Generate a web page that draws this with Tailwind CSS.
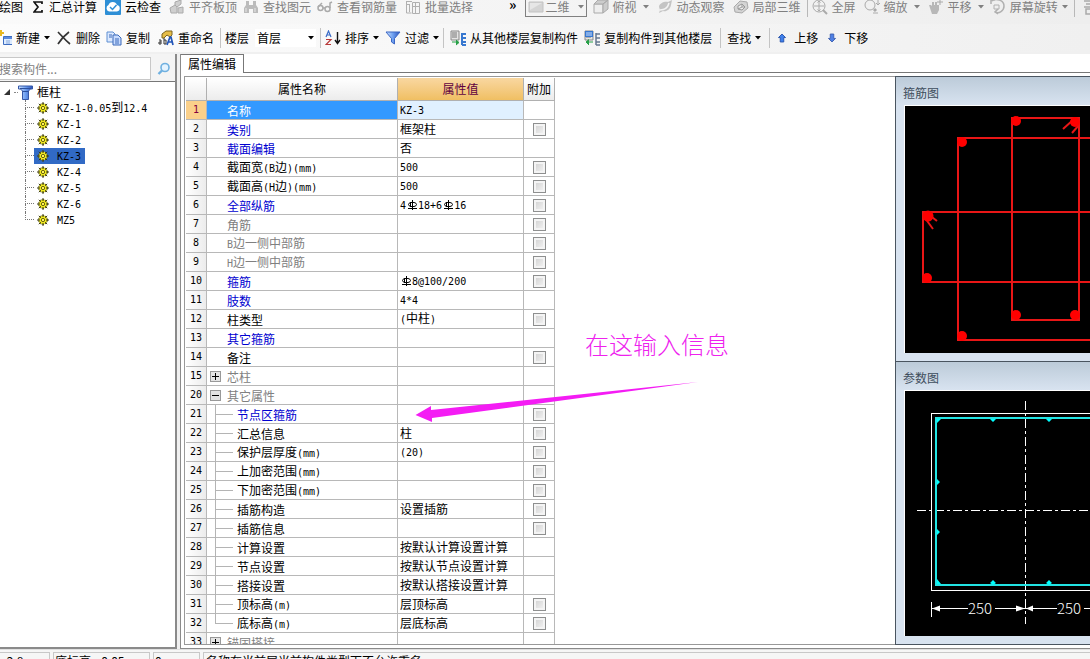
<!DOCTYPE html>
<html lang="zh-CN">
<head>
<meta charset="utf-8">
<title>属性编辑</title>
<script src="https://cdn.jsdelivr.net/npm/@tailwindcss/browser@4"></script>
</head>
<body class="flex h-screen flex-col overflow-hidden bg-[#f3f3f3] font-['Noto_Sans_CJK_SC',sans-serif] text-xs leading-4 text-black">

<svg class="absolute size-0" aria-hidden="true">
  <defs>
    <linearGradient id="blue" x1="0" x2="1"><stop offset="0" stop-color="#cfe4ff"/><stop offset=".5" stop-color="#6d9ff0"/><stop offset="1" stop-color="#2a50b8"/></linearGradient>
    <symbol id="caret" viewBox="0 0 6 4"><path d="M0 0h6L3 3.5z" fill="currentColor"/></symbol>
    <symbol id="gear" viewBox="0 0 12 12">
      <circle cx="6" cy="6" r="4.4" fill="#f4ee20" stroke="#3c3a10" stroke-dasharray="1.8 1"/>
      <path d="M6 0v3M6 9v3M0 6h3M9 6h3M1.8 1.8l2 2M8.2 8.2l2 2M10.2 1.8l-2 2M3.8 8.2l-2 2" stroke="#3c3a10"/>
      <circle cx="6" cy="6" r="1.7" fill="#fff45a" stroke="#6a6410"/>
    </symbol>
    <symbol id="rebar" viewBox="0 0 12 12"><path d="M6.500 1v10M2 9.500h9" fill="none" stroke="#000"/><ellipse cx="6.500" cy="5.500" rx="4" ry="2.200" fill="none" stroke="#000"/><path d="M4.500 3v5" stroke="#000"/></symbol>
    <symbol id="floors" viewBox="0 0 16 16">
      <path d="M1 1h8v9H1z" fill="#e4e4e4" stroke="#888"/><path d="M2 3h5M2 5h5M2 7h5" stroke="#777"/>
    </symbol>
  </defs>
</svg>

<header class="shrink-0">
  <nav aria-label="视图工具栏" class="flex h-6 items-center overflow-hidden bg-linear-to-r from-[#fafafa] to-[#eeeeee] pb-2.5 whitespace-nowrap text-[#808080]">
    <button class="-ml-px text-black">绘图</button>
    <button class="ml-2.5 flex items-center gap-1.5 text-black"><svg class="h-3 w-2.5" viewBox="0 0 10 12"><path d="M9 3V1H1l4 5-4 5h8V9" fill="none" stroke="#111" stroke-width="1.7"/></svg>汇总计算</button>
    <button class="ml-2 flex items-center gap-1 text-black"><svg class="size-4" viewBox="0 0 16 16"><rect width="16" height="16" rx="1" fill="#2e8fd6"/><path d="M4 12.500a3.500 3.500 0 0 1-.5-6.500 4.500 4.500 0 0 1 8.500 0 3.300 3.300 0 0 1 0 6.500z" fill="#fff"/><path d="m5 8 2.500 2.500L11.500 6" fill="none" stroke="#2e8fd6" stroke-width="1.500"/></svg>云检查</button>
    <button class="ml-2 flex items-center gap-1" disabled><svg class="size-4" viewBox="0 0 16 16"><path d="M1 9 6 6l2 2v6H2zM6 6V3l6-2v4l-4 3M9 9l5-1v6H9z" fill="#cfcfcf" stroke="#aaa"/></svg>平齐板顶</button>
    <button class="ml-1.5 flex items-center gap-1" disabled><svg class="size-4" viewBox="0 0 16 16"><path d="M3 2h3v4h4V2h3v4l2 3v5h-5v-4H6v4H1V9l2-3z" fill="#bbb"/><path d="M3 9v4M12 9v4" stroke="#e8e8e8"/></svg>查找图元</button>
    <button class="ml-1.5 flex items-center gap-1" disabled><svg class="size-4" viewBox="0 0 16 16" fill="none" stroke="#aaa" stroke-width="1.500"><circle cx="3.500" cy="9" r="2.500"/><circle cx="10.500" cy="10" r="2.500"/><path d="M6 9l2 0M1 8 5 4M13 9V4l2-1"/></svg>查看钢筋量</button>
    <button class="ml-2 flex items-center gap-1" disabled><svg class="size-4" viewBox="0 0 16 16" fill="none" stroke="#b0b0b0"><path d="M1 2.500h6M1 5.500h4M1.500 2v12h5M4.500 5v8M7.500 3.500h7v11h-7zM7.500 7.500h7M10.500 4v10"/></svg>批量选择</button>
    <button class="-mt-1.5 ml-9 w-2 text-sm leading-3 font-bold text-black" aria-label="更多">»</button>
    <button class="-mt-1 ml-2 flex h-6 items-center gap-0.5 border border-[#808080] pt-1 pr-0.5 pl-0.5" disabled><svg class="h-3 w-4" viewBox="0 0 16 12"><path d="M1 1h14v10H1z" fill="#d4d4d4" stroke="#c2c2c2"/><path d="M2 2h12L2 9z" fill="#e6e6e6"/></svg>二维<svg class="ml-1.5 h-1 w-1.5"><use href="#caret"/></svg></button>
    <button class="ml-1.5 flex items-center gap-1" disabled><svg class="size-4" viewBox="0 0 16 16"><path d="M1 5h9v9H1z" fill="#eee" stroke="#aaa"/><path d="m1 5 4-4h10l-5 4zM10 5l5-4v9l-5 4z" fill="#ccc" stroke="#aaa"/></svg>俯视<svg class="ml-0.5 h-1 w-1.5"><use href="#caret"/></svg></button>
    <button class="ml-2 flex items-center gap-1" disabled><svg class="size-4" viewBox="0 0 16 16"><path d="M2 8c0-4 6-6 9-5l4-2-1 5c-1 5-5 7-8 6l-4 2 1-3z" fill="#c4c4c4"/><path d="M3 11c5 0 8-3 9-7" fill="none" stroke="#f4f4f4" stroke-width="1.500"/></svg>动态观察</button>
    <button class="ml-2 flex items-center gap-1" disabled><svg class="size-4" viewBox="0 0 16 16"><path d="m1 8 6-6 7 1 1 6-6 5-7-1z" fill="#d4d4d4" stroke="#aaa"/><path d="m5 7 4-2 3 3-3 3-4-1zM9 5v3l-4 2M9 8h3" fill="#eee" stroke="#999"/></svg>局部三维</button>
    <span class="ml-1.5 h-5 w-px shrink-0 bg-[#b8b8b8]"></span>
    <button class="ml-1 flex items-center gap-1" disabled><svg class="size-4" viewBox="0 0 16 16" fill="none" stroke="#aaa"><circle cx="7" cy="7" r="6"/><path d="M7 2v10M2 7h10M5.500 3.500 7 2l1.500 1.500M5.500 10.500 7 12l1.500-1.500"/><path d="m11 11 4 4" stroke-width="2"/></svg>全屏</button>
    <button class="ml-2 flex items-center gap-1" disabled><svg class="size-4" viewBox="0 0 16 16" fill="none" stroke="#aaa"><circle cx="6" cy="6" r="5"/><path d="m10 10 2 2" stroke-width="3"/><path d="M14 1v5m-2-2 2 2 2-2M9 14h5"/></svg>缩放<svg class="ml-0.5 h-1 w-1.5"><use href="#caret"/></svg></button>
    <button class="ml-2 flex items-center gap-1" disabled><svg class="size-4" viewBox="0 0 16 16"><path d="M2 9 1 6l2 0 1 1V3h2v3h1V3h2v3h2v5l-2 4H4z" fill="#b8b8b8"/><path d="M12 0v6M9 3h6" stroke="#aaa"/></svg>平移<svg class="ml-0.5 h-1 w-1.5"><use href="#caret"/></svg></button>
    <button class="ml-1.5 flex items-center gap-1" disabled><svg class="size-4" viewBox="0 0 16 16" fill="none" stroke="#b0b0b0"><path d="M1 5V1h4M2 2c4-3 12-1 12 5 0 5-5 8-9 6M8 10l-3 3 3 2" stroke-width="1.500"/><path d="M4 6h5v4H4z"/></svg>屏幕旋转<svg class="h-1 w-1.5"><use href="#caret"/></svg></button>
    <span class="ml-1.5 h-5 w-px shrink-0 bg-[#b8b8b8]"></span>
    <button class="ml-2 shrink-0" aria-label="楼层显示" disabled><svg class="size-4" viewBox="0 0 16 16"><path d="M1 2h14M3 5h12M1 8h14M3 10h12v5H3z" fill="none" stroke="#aaa" stroke-width="1.500"/></svg></button>
  </nav>

  <nav aria-label="构件工具栏" class="flex h-7 items-center bg-linear-to-r from-[#fcfcfc] to-[#f0f0f0] whitespace-nowrap">
    <button class="flex items-center gap-1"><svg class="h-4 w-3" viewBox="0 0 12 16"><path d="M0 3h4M1 0v6" stroke="#e8b820" stroke-width="2"/><path d="M3.500 6.500h9v8h-9z" fill="#dcebff" stroke="#3c6cc0"/><path d="M4 8h8" stroke="#5a8ae0" stroke-width="2"/><path d="M6 11h4M6 13h4" stroke="#88a8dc"/></svg>新建<svg class="h-1 w-1.5"><use href="#caret"/></svg></button>
    <button class="ml-1.5 flex items-center gap-1"><svg class="size-4" viewBox="0 0 16 16"><path d="M2 2c4 4 7 8 12 12M13 2C9 5 5 9 2 14" fill="none" stroke="#333" stroke-width="1.700"/></svg>删除</button>
    <button class="ml-1.5 flex items-center gap-1"><svg class="size-4" viewBox="0 0 16 16"><path d="M1 2h6l2 2v8H1z" fill="#dbe9ff" stroke="#5e8fd2"/><path d="M7 5h5l3 3v7H7z" fill="#c8dcff" stroke="#3b69b8"/><path d="M3 5h3M3 7h3M9 9h4M9 11h4M9 13h4" stroke="#3b69b8"/></svg>复制</button>
    <button class="ml-2 flex items-center gap-1"><svg class="size-4" viewBox="0 0 16 16"><path d="m4 4 4-3h6v4l-2 2-3-2-3 3H4z" fill="#e6bd48" stroke="#7c6420"/><path d="M9 15l3-8h1l2 8M10 12h4" fill="none" stroke="#2356b8" stroke-width="1.700"/><path d="M1 10h2v4H1v-2h2M6 8v6h2v-4H6" fill="none" stroke="#333"/></svg>重命名</button>
    <span class="ml-1.5 h-5 w-px bg-[#c4c4c4]"></span>
    <label for="floor" class="ml-1">楼层</label>
    <span class="relative ml-1.5 flex items-center">
      <select id="floor" class="h-[18px] w-[61px] appearance-none bg-white pl-0.5"><option>首层</option></select>
      <svg class="pointer-events-none absolute right-0.5 h-1 w-1.5"><use href="#caret"/></svg>
    </span>
    <span class="ml-1 h-5 w-px bg-[#c4c4c4]"></span>
    <button class="ml-1 flex items-center gap-1"><svg class="size-4" viewBox="0 0 16 16" fill="none"><path d="m1 7 2.500-6L6 7M2 5h3" stroke="#3a6cc8" stroke-width="1.200"/><path d="M1 9.500h5l-5 5h5" stroke="#b83838" stroke-width="1.200"/><path d="M12.500 2v11M10 10l2.500 3.500L15 10" stroke="#111" stroke-width="1.400"/></svg>排序<svg class="h-1 w-1.5"><use href="#caret"/></svg></button>
    <button class="ml-1.5 flex items-center gap-1"><svg class="size-4" viewBox="0 0 16 16"><path d="M1 2h14L9.500 8.500V14l-3-2V8.500z" fill="url(#blue)" stroke="#3b66c4"/></svg>过滤<svg class="h-1 w-1.5"><use href="#caret"/></svg></button>
    <span class="ml-1 h-5 w-px bg-[#c4c4c4]"></span>
    <button class="ml-1.5 flex items-center gap-1"><svg class="size-4" viewBox="0 0 16 16"><use href="#floors"/><path d="M12 3v12M12 4h4M12 8h4M12 12h4M12 15h4" stroke="#3878d0" stroke-width="2"/><path d="M2 12h6M6 10l3 2.500L6 15" fill="#28a048" stroke="#28a048"/></svg>从其他楼层复制构件</button>
    <button class="ml-1.5 flex items-center gap-1"><svg class="size-4" viewBox="0 0 16 16"><use href="#floors"/><path d="M1 1h8v6H1z" fill="#3878d0"/><path d="M2 3h6M2 5h6" stroke="#cfe2ff"/><path d="M12 3v12M12 4h4M12 8h4M12 12h4M12 15h4" stroke="#667890" stroke-width="1.500"/><path d="M3 12h6M5 9.500 2 12l3 3" fill="#28a048" stroke="#28a048"/></svg>复制构件到其他楼层</button>
    <span class="ml-2 h-5 w-px bg-[#c4c4c4]"></span>
    <button class="ml-1.5 flex items-center gap-1">查找<svg class="h-1 w-1.5"><use href="#caret"/></svg></button>
    <span class="ml-2 h-5 w-px bg-[#c4c4c4]"></span>
    <button class="ml-2 flex items-center gap-2"><svg class="h-2.5 w-2" viewBox="0 0 9 10"><path d="m4.500.5 4 4h-2v5h-4v-5h-2z" fill="#3f80ec" stroke="#2450a8"/></svg>上移</button>
    <button class="ml-2.5 flex items-center gap-2"><svg class="h-2.5 w-2" viewBox="0 0 9 10"><path d="m4.500 9.500 4-4h-2v-5h-4v5h-2z" fill="#4f80e4" stroke="#3a5cb0"/></svg>下移</button>
  </nav>
</header>

<main class="flex min-h-0 flex-1 bg-[#f0f0f0] pt-0.5">
  <aside class="flex w-[177px] shrink-0 flex-col border-r-2 border-b-2 border-[#8a8a8a] bg-white">
    <form class="flex h-7 shrink-0 items-center border-b border-[#777] bg-[#f4f4f4] pt-1 pb-0.5">
      <input type="search" aria-label="搜索构件" placeholder="搜索构件..." class="-ml-0.5 h-[23px] w-[153px] border border-[#c8c8c8] bg-white placeholder:text-[#808080]">
      <button type="button" aria-label="搜索" class="ml-1.5"><svg class="size-3.5" viewBox="0 0 14 14" fill="none" stroke="#6fb0e0"><circle cx="8" cy="5.500" r="4" fill="#e4f3ff" stroke-width="1.600"/><path d="M5 8.500 1.500 12" stroke-width="2.400"/></svg></button>
    </form>
    <div class="pt-0.5">
      <div class="flex h-4 items-center pl-1">
        <svg class="size-1.5" viewBox="0 0 7 7"><path d="M7 0v7H0z" fill="#333"/></svg>
        <span class="ml-1 w-1 border-t border-dotted border-[#888]"></span>
        <svg class="size-[15px]" viewBox="0 0 15 15"><path d="M.5 1h14v3h-2l-2 2v8.500h-6V6l-2-2h-2z" fill="url(#blue)" stroke="#3558a8"/><path d="M2 3.500h11M5 6.500h5" stroke="#2b4f9c"/></svg>
        <span class="ml-1">框柱</span>
      </div>
      <ul id="tree" class="ml-[25px]"></ul>
    </div>
  </aside>

  <section class="ml-[3px] flex min-w-0 flex-1 flex-col border-b border-l border-[#8a8a8a] bg-white">
    <div role="tablist" class="flex h-[19px] shrink-0 items-end">
      <button role="tab" aria-selected="true" class="h-[19px] w-[63px] border-t border-r border-[#777]">属性编辑</button>
      <span class="flex-1 self-stretch border-b border-[#777]"></span>
    </div>
    <div class="mt-[3px] mb-[3px] ml-[3px] flex min-h-0 flex-1">
      <div class="relative min-w-0 flex-1 overflow-hidden border border-r-0 border-[#999] pt-px pl-px">
        <table class="w-[369px] table-fixed border-separate border-spacing-0">
          <colgroup><col class="w-[21px]"><col class="w-[191px]"><col class="w-[126px]"><col class="w-[31px]"></colgroup>
          <thead>
            <tr class="h-[23px]">
              <th class="border-r border-b border-[#b0b0b0] bg-linear-to-b from-white to-[#ececec] p-0"></th>
              <th class="border-r border-b border-[#b0b0b0] bg-linear-to-b from-white to-[#ececec] p-0 font-normal">属性名称</th>
              <th class="border-r border-b border-[#b0b0b0] bg-linear-to-b from-[#f9d7a0] to-[#f0bf62] p-0 font-normal text-[#600040]">属性值</th>
              <th class="border-r border-b border-[#b0b0b0] bg-linear-to-b from-white to-[#ececec] p-0 font-normal">附加</th>
            </tr>
          </thead>
          <tbody id="props"></tbody>
        </table>
        <p class="absolute top-[251px] left-[400px] text-2xl font-light whitespace-nowrap text-[#ee22ee]">在这输入信息</p>
        <svg class="pointer-events-none absolute top-[303px] left-[230px] h-11 w-[290px]" viewBox="415 380 290 44"><path d="M415.500 415 431 406v4L698 382 432 418v4z" fill="#f41cf4"/></svg>
      </div>

      <div class="flex w-[195px] shrink-0 flex-col border-t border-l border-[#4a5560] bg-[#d8e3f0]">
        <section class="flex flex-col border-b border-[#4a5560] pb-2 pl-2">
          <h2 class="-ml-2 flex h-7 items-center bg-linear-to-b from-[#bccbd9] to-[#d8e3f0] pt-1 pl-[7px] text-[#3e4d5c]">箍筋图</h2>
          <svg class="h-[248px] w-full border-t border-l border-white bg-black" viewBox="905 106 185 247" preserveAspectRatio="xMinYMin slice">
            <g fill="none" stroke="#e81616" stroke-width="2">
              <path d="M1012 118h67v202h-67zM1092 138H958v202h134M1092 212H923v70h169"/>
              <path d="m1063 129 10-9M1072 133l7-8M925 218l8 11M928 214l9 7"/>
            </g>
            <g fill="#ff0000"><circle cx="962" cy="142" r="5"/><circle cx="1016" cy="121" r="5"/><circle cx="1075" cy="122" r="5"/><circle cx="928" cy="216" r="5.500"/><circle cx="927" cy="278" r="5"/><circle cx="962" cy="336" r="5"/><circle cx="1016" cy="315" r="5"/><circle cx="1075" cy="315" r="5"/></g>
          </svg>
        </section>
        <section class="flex min-h-0 flex-1 flex-col border-b border-[#4a5560] pb-2 pl-2">
          <h2 class="-ml-2 flex h-7 shrink-0 items-center bg-linear-to-b from-[#bccbd9] to-[#d8e3f0] pt-1 pl-[7px] text-[#3e4d5c]">参数图</h2>
          <svg class="min-h-0 w-full flex-1 border-t border-l border-white bg-black" viewBox="905 391 185 245" preserveAspectRatio="xMinYMin slice">
            <g fill="none" stroke="#fff" shape-rendering="crispEdges">
              <path d="M1092 413.500H931.500v177H1092"/>
              <path d="M1025.500 401v223M917 510.500h175" stroke-dasharray="9 3 3 3"/>
              <path d="M931.500 602v15M932 608.500h36M995 608.500h62M1084 608.500h8"/>
            </g>
            <path d="M1092 418H936v167h156" fill="none" stroke="#22e4e4" stroke-width="2"/>
            <path d="m937 419h4l-4 4zM937 584v-5l4 5zM990 419h6l-3 3zM1046 419h6l-3 3zM990 583l3-3 3 3-3 2zM1046 583l3-3 3 3-3 2zM937 479l3 3-3 3zM937 529l3 3-3 3z" fill="#00ffff"/>
            <path d="m932 608.500 8-3v6zM1025 608.500l-9-3v6zM1026 608.500l7-3v6z" fill="#fff"/>
            <g fill="#fff" font-family="'Noto Sans CJK SC', sans-serif" font-weight="300" font-size="15"><text x="968" y="614">250</text><text x="1057" y="614">250</text></g>
          </svg>
        </section>
      </div>
    </div>
  </section>
</main>

<footer class="flex h-2.5 shrink-0 gap-[3px] overflow-hidden border-t border-[#e0e0e0] bg-[#f6f6f6] pt-0.5 whitespace-nowrap">
  <span class="h-5 w-[50px] border-t border-r border-[#c8c8c8]">~2.8</span>
  <span class="h-5 w-[97px] border-t border-x border-[#c8c8c8] pl-px">底标高: -0.05</span>
  <span class="h-5 w-[47px] border-t border-x border-[#c8c8c8] pl-px">0</span>
  <span class="h-5 flex-1 border-t border-l border-[#c8c8c8] pl-0.5">名称在当前层当前构件类型下不允许重名</span>
</footer>

<script>
  // Latin runs use a half-width face; "#" stands for the rebar grade mark.
  const mix = s => s.replace(/[\x21-\x7e]+/g, run => run.split(/(#)/).filter(Boolean).map(p => p === '#'
    ? `<svg class="inline-block size-3 align-[-2px]" role="img" aria-label="钢筋符号"><use href="#rebar"/></svg>`
    : `<span class="font-['DejaVu_Sans_Mono',monospace] text-[10px]">${p}</span>`).join(''));

  document.getElementById('tree').innerHTML = ['KZ-1-0.05到12.4','KZ-1','KZ-2','KZ-3','KZ-4','KZ-5','KZ-6','MZ5'].map((n, i, all) => `
    <li class="flex h-4 items-center">
      <span class="flex h-4 w-[9px] flex-col"><span class="h-2 border-b border-l border-dotted border-[#777]"></span>${i < all.length - 1 ? '<span class="h-2 border-l border-dotted border-[#777]"></span>' : ''}</span>
      <a href="#" class="flex h-4 items-center gap-2 pr-1 pl-[3px] leading-4 ${n === 'KZ-3' ? 'bg-[#316ac5]' : ''}"><svg class="size-3"><use href="#gear"/></svg><span>${mix(n)}</span></a>
    </li>`).join('');

  // number, name, value, has checkbox, tone (k black, b blue, g gray), kind
  const rows = [
    [1,'名称','KZ-3',0,'w'],[2,'类别','框架柱',1,'b'],[3,'截面编辑','否',0,'b'],[4,'截面宽(B边)(mm)','500',1,'k'],
    [5,'截面高(H边)(mm)','500',1,'k'],[6,'全部纵筋','4#18+6#16',1,'b'],[7,'角筋','',1,'g'],[8,'B边一侧中部筋','',1,'g'],
    [9,'H边一侧中部筋','',1,'g'],[10,'箍筋','#8@100/200',1,'b'],[11,'肢数','4*4',0,'b'],[12,'柱类型','(中柱)',1,'k'],
    [13,'其它箍筋','',0,'b'],[14,'备注','',1,'k'],[15,'芯柱','',0,'g','plus'],[20,'其它属性','',0,'g','minus'],
    [21,'节点区箍筋','',1,'b','child'],[22,'汇总信息','柱',1,'k','child'],[23,'保护层厚度(mm)','(20)',1,'k','child'],
    [24,'上加密范围(mm)','',1,'k','child'],[25,'下加密范围(mm)','',1,'k','child'],[26,'插筋构造','设置插筋',1,'k','child'],
    [27,'插筋信息','',1,'k','child'],[28,'计算设置','按默认计算设置计算',0,'k','child'],[29,'节点设置','按默认节点设置计算',0,'k','child'],
    [30,'搭接设置','按默认搭接设置计算',0,'k','child'],[31,'顶标高(m)','层顶标高',1,'k','child'],[32,'底标高(m)','层底标高',1,'k','last'],
    [33,'锚固搭接','',0,'g','plus']
  ];
  const tone = { k: 'text-black', b: 'text-[#0000d0]', g: 'text-[#808080]', w: 'text-white' };
  const box = d => `<button class="mr-1.5 ml-[3px] size-[11px] border border-[#999] bg-[#e4e4e4]" aria-label="展开或折叠"><svg class="size-[9px]" viewBox="0 0 9 9"><path d="${d}" stroke="#000" shape-rendering="crispEdges"/></svg></button>`;
  const branch = d => `<svg class="h-[19px] w-[30px] shrink-0" viewBox="0 0 30 19"><path d="${d}" fill="none" stroke="#b4b4b4" shape-rendering="crispEdges"/></svg>`;
  const lead = {
    plus: box('M1 4.500h7M4.500 1v7'), minus: box('M1 4.500h7'),
    child: branch('M8.500 0v19M8.500 9.500h17'), last: branch('M8.500 0v9.500h17'),
    none: '<span class="w-5"></span>'
  };
  document.getElementById('props').innerHTML = rows.map(([n, name, value, check, t, kind = 'none']) => `
    <tr class="h-[19px]">
      <th scope="row" class="border-r border-b border-[#b8b8b8] p-0 font-normal ${n === 1 ? 'bg-[#fbd08a] text-[#800040]' : 'bg-linear-to-r from-white to-[#ececec]'}"><div class="flex h-[18px] items-center justify-center">${mix(String(n))}</div></th>
      <td class="border-r border-b border-[#b8b8b8] p-0 ${n === 1 ? 'bg-[#3399ff]' : ''}"><div class="flex h-[18px] items-center ${tone[t]}">${lead[kind]}<span class="pt-0.5">${mix(name)}</span></div></td>
      <td class="border-r border-b border-[#b8b8b8] p-0 pl-0.5 ${n === 1 ? 'bg-[#e0f0ff]' : ''}"><div class="flex h-[18px] items-center"><span>${mix(value)}</span></div></td>
      <td class="border-r border-b border-[#b8b8b8] p-0"><div class="flex h-[18px] items-center justify-center">${check ? `<input type="checkbox" aria-label="附加 ${name}" class="size-[13px] appearance-none border border-[#8e8f8f] bg-linear-to-br from-[#cfcfcf] to-[#f6f6f6] inset-ring-2 inset-ring-[#f4f4f4]">` : ''}</div></td>
    </tr>`).join('');
</script>
</body>
</html>
